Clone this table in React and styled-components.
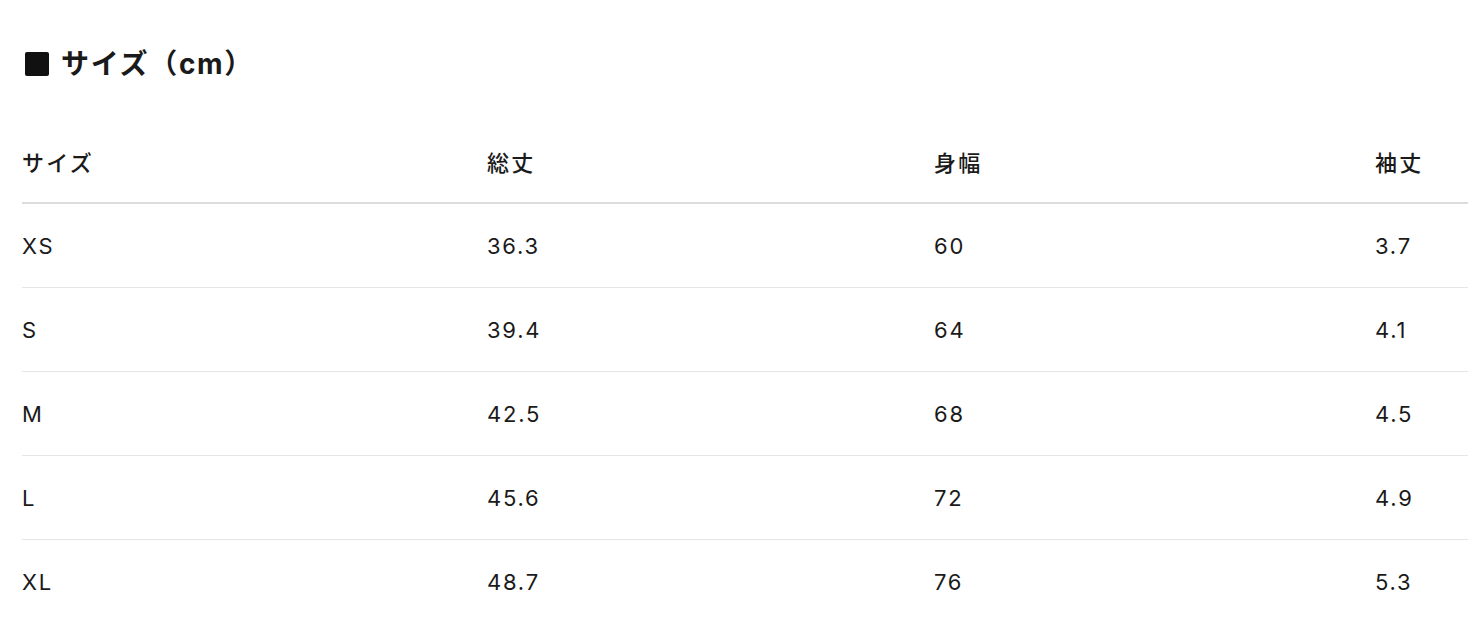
import React from 'react';
import styled, { createGlobalStyle } from 'styled-components';

const GlobalStyle = createGlobalStyle`
  html, body {
    margin: 0;
    padding: 0;
    background: #fff;
  }
  body {
    font-family: Inter, "Noto Sans CJK JP", sans-serif;
    color: #1a1a1a;
  }
`;

const Page = styled.div`
  padding: 44px 0 0 22px;
  overflow: hidden;
`;

const Heading = styled.h2`
  margin: 0 0 36px;
  font-size: 28px;
  line-height: 40px;
  font-weight: 700;
  letter-spacing: 0.06em;
  display: flex;
  align-items: center;
  gap: 12px;
`;

const Square = styled.span`
  display: inline-block;
  width: 24px;
  height: 24px;
  margin-left: 3px;
  background: #111;
  border-radius: 2px;
`;

const Table = styled.table`
  width: 1446px;
  border-collapse: collapse;
  table-layout: fixed;
  font-size: 22px;
  letter-spacing: 0.08em;
`;

const Th = styled.th`
  text-align: left;
  font-weight: 500;
  letter-spacing: 0.1em;
  height: 82px;
  padding: 0;
  vertical-align: middle;
  border-bottom: 2px solid #dcdcdc;
`;

const Td = styled.td`
  height: 83px;
  padding: 0;
  vertical-align: middle;
  border-bottom: ${(p) => (p.$last ? 'none' : '1px solid #e6e6e6')};
`;

const columns = ['サイズ', '総丈', '身幅', '袖丈'];
const widths = [465, 447, 441, 93];

const rows = [
  ['XS', '36.3', '60', '3.7'],
  ['S', '39.4', '64', '4.1'],
  ['M', '42.5', '68', '4.5'],
  ['L', '45.6', '72', '4.9'],
  ['XL', '48.7', '76', '5.3'],
];

export default function App() {
  return (
    <Page>
      <GlobalStyle />
      <Heading>
        <Square />
        サイズ（cm）
      </Heading>
      <Table>
        <colgroup>
          {widths.map((w, i) => (
            <col key={i} style={{ width: w }} />
          ))}
        </colgroup>
        <thead>
          <tr>
            {columns.map((c) => (
              <Th key={c}>{c}</Th>
            ))}
          </tr>
        </thead>
        <tbody>
          {rows.map((r, i) => (
            <tr key={r[0]}>
              {r.map((v, j) => (
                <Td key={j} $last={i === rows.length - 1}>
                  {v}
                </Td>
              ))}
            </tr>
          ))}
        </tbody>
      </Table>
    </Page>
  );
}
